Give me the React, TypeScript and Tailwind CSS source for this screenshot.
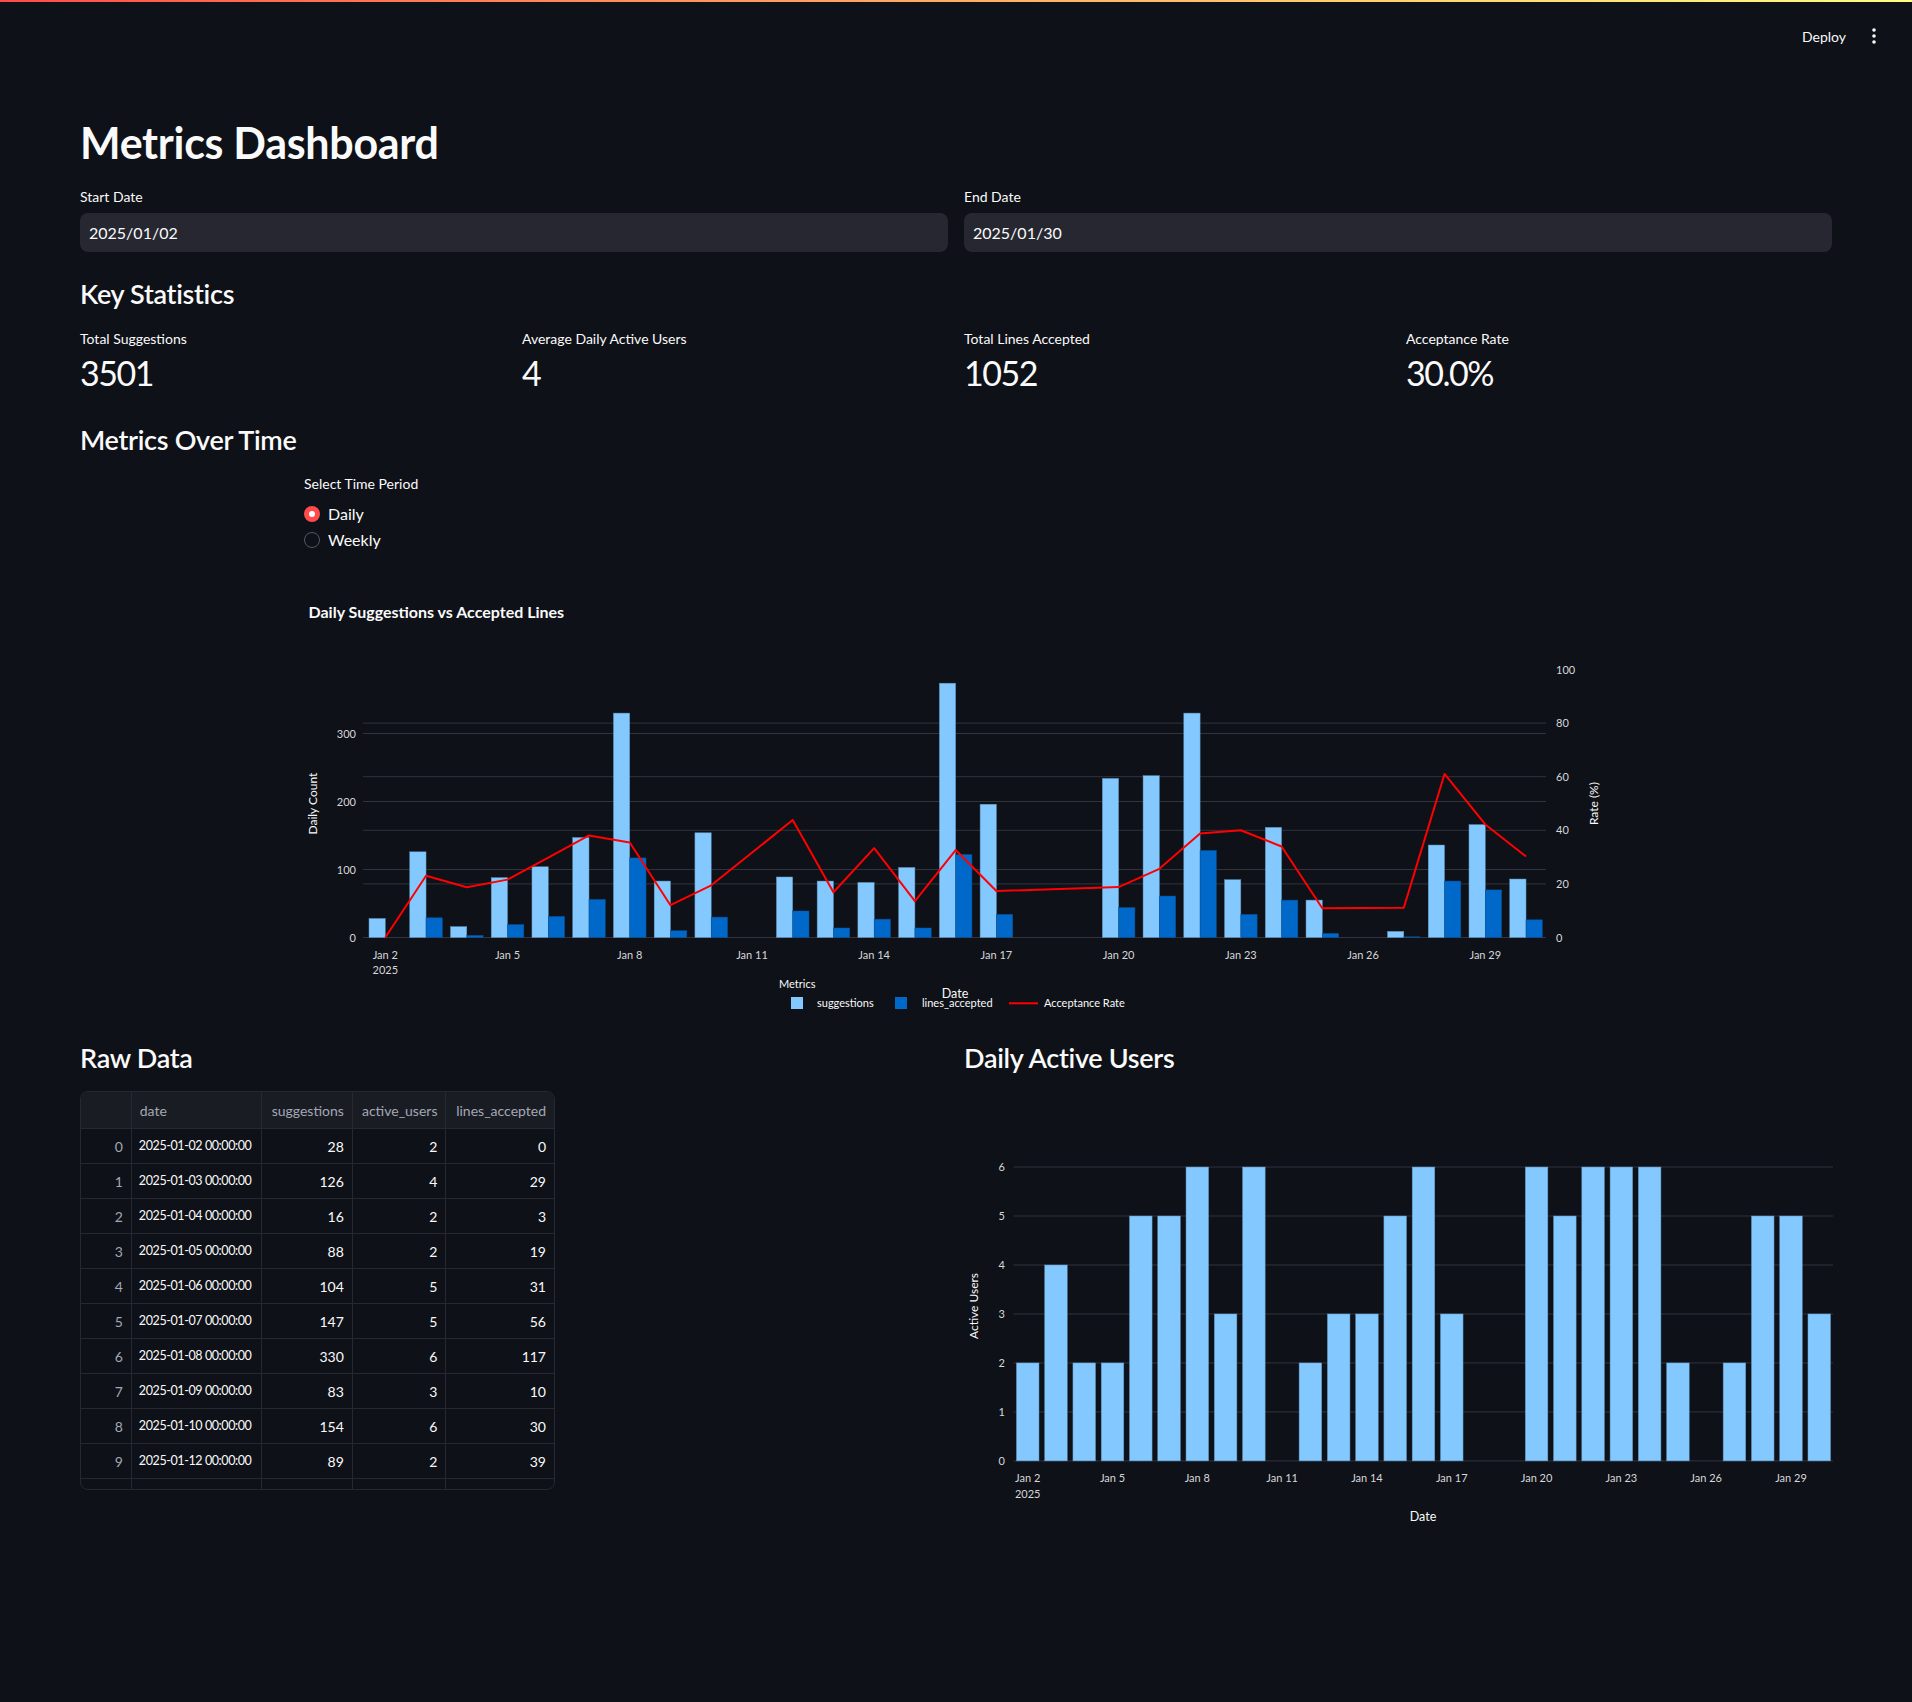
import React from "react";

const days = [
  { d: 2, s: 28, l: 0, u: 2 },
  { d: 3, s: 126, l: 29, u: 4 },
  { d: 4, s: 16, l: 3, u: 2 },
  { d: 5, s: 88, l: 19, u: 2 },
  { d: 6, s: 104, l: 31, u: 5 },
  { d: 7, s: 147, l: 56, u: 5 },
  { d: 8, s: 330, l: 117, u: 6 },
  { d: 9, s: 83, l: 10, u: 3 },
  { d: 10, s: 154, l: 30, u: 6 },
  { d: 12, s: 89, l: 39, u: 2 },
  { d: 13, s: 83, l: 14, u: 3 },
  { d: 14, s: 81, l: 27, u: 3 },
  { d: 15, s: 103, l: 14, u: 5 },
  { d: 16, s: 374, l: 122, u: 6 },
  { d: 17, s: 196, l: 34, u: 3 },
  { d: 20, s: 234, l: 44, u: 6 },
  { d: 21, s: 238, l: 61, u: 5 },
  { d: 22, s: 330, l: 128, u: 6 },
  { d: 23, s: 85, l: 34, u: 6 },
  { d: 24, s: 162, l: 55, u: 6 },
  { d: 25, s: 55, l: 6, u: 2 },
  { d: 27, s: 9, l: 1, u: 2 },
  { d: 28, s: 136, l: 83, u: 5 },
  { d: 29, s: 166, l: 70, u: 5 },
  { d: 30, s: 86, l: 26, u: 3 },
];

const xTicks = [2, 5, 8, 11, 14, 17, 20, 23, 26, 29];
const FONT = "Lato, 'Liberation Sans', sans-serif";
const GRID = "#31333f";
const TICK = "#d6d7db";

const stats = [
  { label: "Total Suggestions", value: "3501" },
  { label: "Average Daily Active Users", value: "4" },
  { label: "Total Lines Accepted", value: "1052" },
  { label: "Acceptance Rate", value: "30.0%" },
];

// main chart scales (svg is 1304 x 440)
const X1 = (d: number) => 81.3 + (d - 2) * 40.74;
const Y1 = (v: number) => 357.5 - 0.68 * v;
const R1 = (r: number) => 357.5 - 2.68 * r;

// active users chart scales (svg is 869 x 440)
const X2 = (d: number) => 63.7 + (d - 2) * 28.27;
const Y2 = (v: number) => 369.9 - 48.98 * v;

function MetricsChart() {
  const bw = 16.3;
  const line = days.map((p) => `${X1(p.d)},${R1((p.l / p.s) * 100)}`).join(" ");
  return (
    <svg width={1304} height={440} fontFamily={FONT}>
      <text x={4.5} y={38} fill="#fafafa" fontSize={16} fontWeight={700}>
        Daily Suggestions vs Accepted Lines
      </text>
      {[300, 200, 100].map((v) => (
        <line key={"l" + v} x1={59} x2={1242} y1={Y1(v)} y2={Y1(v)} stroke={GRID} strokeWidth={1} />
      ))}
      {[80, 60, 40, 20].map((r) => (
        <line key={"r" + r} x1={59} x2={1242} y1={R1(r)} y2={R1(r)} stroke={GRID} strokeWidth={1} />
      ))}
      <line x1={59} x2={1242} y1={357.5} y2={357.5} stroke={GRID} strokeWidth={1} />
      {days.map((p) => (
        <g key={p.d}>
          <rect x={X1(p.d) - bw} y={Y1(p.s)} width={bw} height={357.5 - Y1(p.s)} fill="#83c9ff" stroke="#5d8fb8" strokeWidth={0.5} />
          <rect x={X1(p.d)} y={Y1(p.l)} width={bw} height={357.5 - Y1(p.l)} fill="#0068c9" stroke="#0a4f94" strokeWidth={0.5} />
        </g>
      ))}
      <polyline points={line} fill="none" stroke="#ff0000" strokeWidth={2} strokeLinejoin="round" />
      {[0, 100, 200, 300].map((v) => (
        <text key={v} x={52} y={Y1(v) + 4} textAnchor="end" fill={TICK} fontSize={11}>
          {v}
        </text>
      ))}
      {[0, 20, 40, 60, 80, 100].map((r) => (
        <text key={r} x={1252} y={R1(r) + 4} fill={TICK} fontSize={11}>
          {r}
        </text>
      ))}
      {xTicks.map((d) => (
        <text key={d} x={X1(d)} y={379} textAnchor="middle" fill={TICK} fontSize={11}>
          Jan {d}
        </text>
      ))}
      <text x={X1(2)} y={394} textAnchor="middle" fill={TICK} fontSize={11}>
        2025
      </text>
      <text transform="translate(13 223.6) rotate(-90)" textAnchor="middle" fill="#fafafa" fontSize={12}>
        Daily Count
      </text>
      <text transform="translate(1294 223.6) rotate(-90)" textAnchor="middle" fill="#fafafa" fontSize={12}>
        Rate (%)
      </text>
      <text x={475} y={408} fill="#fafafa" fontSize={11}>
        Metrics
      </text>
      <text x={651} y={418} textAnchor="middle" fill="#fafafa" fontSize={12.5}>
        Date
      </text>
      <rect x={487} y={417} width={12} height={12} fill="#83c9ff" />
      <text x={513} y={427} fill="#fafafa" fontSize={11}>
        suggestions
      </text>
      <rect x={591} y={417} width={12} height={12} fill="#0068c9" />
      <text x={618} y={427} fill="#fafafa" fontSize={11}>
        lines_accepted
      </text>
      <line x1={705} x2={734} y1={423.3} y2={423.3} stroke="#ff0000" strokeWidth={2} />
      <text x={740} y={427} fill="#fafafa" fontSize={11}>
        Acceptance Rate
      </text>
    </svg>
  );
}

function UsersChart() {
  const bw = 22.6;
  return (
    <svg width={869} height={440} fontFamily={FONT}>
      {[1, 2, 3, 4, 5, 6].map((v) => (
        <line key={v} x1={49.6} x2={869} y1={Y2(v)} y2={Y2(v)} stroke={GRID} strokeWidth={1} />
      ))}
      <line x1={49.6} x2={869} y1={Y2(0)} y2={Y2(0)} stroke={GRID} strokeWidth={1} />
      {days.map((p) => (
        <rect key={p.d} x={X2(p.d) - bw / 2} y={Y2(p.u)} width={bw} height={Y2(0) - Y2(p.u)} fill="#83c9ff" stroke="#5d8fb8" strokeWidth={0.5} />
      ))}
      {[0, 1, 2, 3, 4, 5, 6].map((v) => (
        <text key={v} x={41} y={Y2(v) + 4} textAnchor="end" fill={TICK} fontSize={11}>
          {v}
        </text>
      ))}
      {xTicks.map((d) => (
        <text key={d} x={X2(d)} y={391} textAnchor="middle" fill={TICK} fontSize={11}>
          Jan {d}
        </text>
      ))}
      <text x={X2(2)} y={407} textAnchor="middle" fill={TICK} fontSize={11}>
        2025
      </text>
      <text transform="translate(14 215) rotate(-90)" textAnchor="middle" fill="#fafafa" fontSize={12}>
        Active Users
      </text>
      <text x={459} y={430} textAnchor="middle" fill="#fafafa" fontSize={12.5}>
        Date
      </text>
    </svg>
  );
}

function RawTable() {
  const cols = ["w-[51px]", "w-[131px]", "w-[91px]", "w-[94px]", "w-[108px]"];
  const rows = days.slice(0, 10);
  return (
    <div className="mt-[16px] h-[399px] w-[475px] overflow-hidden rounded-lg border border-[#262931] text-[14px]">
      <div className="flex h-[36px] bg-[#1a1c24] text-[#a3a8b4]">
        <div className={`${cols[0]} border-r border-[#262931]`} />
        <div className={`${cols[1]} flex items-center border-r border-[#262931] px-2`}>date</div>
        <div className={`${cols[2]} flex items-center justify-end border-r border-[#262931] px-2`}>suggestions</div>
        <div className={`${cols[3]} flex items-center justify-end border-r border-[#262931] px-2`}>active_users</div>
        <div className={`${cols[4]} flex items-center justify-end px-2`}>lines_accepted</div>
      </div>
      {rows.map((r, i) => (
        <div key={r.d} className="flex h-[35px] border-t border-[#262931] text-[#fafafa]">
          <div className={`${cols[0]} flex items-center justify-end border-r border-[#262931] px-2 text-[#a3a8b4]`}>{i}</div>
          <div className={`${cols[1]} flex items-center overflow-hidden whitespace-nowrap border-r border-[#262931] px-[7px] text-[12.5px] tracking-[-0.4px]`}>
            2025-01-{String(r.d).padStart(2, "0")} 00:00:00
          </div>
          <div className={`${cols[2]} flex items-center justify-end border-r border-[#262931] px-2`}>{r.s}</div>
          <div className={`${cols[3]} flex items-center justify-end border-r border-[#262931] px-2`}>{r.u}</div>
          <div className={`${cols[4]} flex items-center justify-end px-2`}>{r.l}</div>
        </div>
      ))}
      {/* next row, scrolled out of view */}
      <div className="flex h-[35px] border-t border-[#262931]">
        <div className={`${cols[0]} border-r border-[#262931]`} />
        <div className={`${cols[1]} border-r border-[#262931]`} />
        <div className={`${cols[2]} border-r border-[#262931]`} />
        <div className={`${cols[3]} border-r border-[#262931]`} />
        <div className={cols[4]} />
      </div>
    </div>
  );
}

export default function App() {
  return (
    <div className="min-h-[1702px] bg-[#0e1117] font-[Lato,'Liberation_Sans',sans-serif] text-[#fafafa]">
      <div className="h-[2px] bg-gradient-to-r from-[#ff4b4b] to-[#fffd80]" />
      <header className="flex h-[68px] items-center justify-end gap-[14px] pr-[24px]">
        <span className="text-[14px]">Deploy</span>
        <div className="flex w-7 justify-center">
          <svg width="4" height="16" viewBox="0 0 4 16">
            <circle cx="2" cy="2" r="1.8" fill="#fafafa" />
            <circle cx="2" cy="8" r="1.8" fill="#fafafa" />
            <circle cx="2" cy="14" r="1.8" fill="#fafafa" />
          </svg>
        </div>
      </header>

      <main className="px-[80px]">
        <h1 className="mt-[46px] text-[43px] font-bold leading-[53px] tracking-[-0.3px]">Metrics Dashboard</h1>

        <div className="mt-[18px] grid grid-cols-2 gap-4">
          {[
            ["Start Date", "2025/01/02"],
            ["End Date", "2025/01/30"],
          ].map(([label, value]) => (
            <div key={label}>
              <div className="text-[14px] leading-[20px]">{label}</div>
              <div className="mt-[6px] flex h-[39px] items-center rounded-lg bg-[#262730] px-[9px] text-[16px]">{value}</div>
            </div>
          ))}
        </div>

        <h3 className="mt-[25px] text-[27px] font-semibold leading-[34px] tracking-[-0.3px]">Key Statistics</h3>
        <div className="mt-[18px] grid grid-cols-4 gap-4">
          {stats.map((s) => (
            <div key={s.label}>
              <div className="text-[14px] leading-[20px]">{s.label}</div>
              <div className="mt-[2px] text-[34px] leading-[44px] tracking-[-1.5px]">{s.value}</div>
            </div>
          ))}
        </div>

        <h3 className="mt-[28px] text-[27px] font-semibold leading-[34px] tracking-[-0.3px]">Metrics Over Time</h3>
        <div className="pl-[224px]">
          <div className="mt-[17px] text-[14px] leading-[20px]">Select Time Period</div>
          <div className="mt-[8px] flex flex-col gap-[2px]">
            <div className="flex h-[24px] items-center gap-[8px]">
              <div className="flex h-4 w-4 items-center justify-center rounded-full bg-[#ff4b4b]">
                <div className="h-1.5 w-1.5 rounded-full bg-white" />
              </div>
              <span className="text-[16px]">Daily</span>
            </div>
            <div className="flex h-[24px] items-center gap-[8px]">
              <div className="h-4 w-4 rounded-full border border-[#555862]" />
              <span className="text-[16px]">Weekly</span>
            </div>
          </div>
          <div className="mt-[28px]">
            <MetricsChart />
          </div>
        </div>

        <div className="grid grid-cols-2 gap-4">
          <div>
            <h3 className="mt-[21px] text-[27px] font-semibold leading-[34px] tracking-[-0.3px]">Raw Data</h3>
            <RawTable />
          </div>
          <div>
            <h3 className="mt-[21px] text-[27px] font-semibold leading-[34px] tracking-[-0.3px]">Daily Active Users</h3>
            <div className="mt-[16px]">
              <UsersChart />
            </div>
          </div>
        </div>
      </main>
    </div>
  );
}
